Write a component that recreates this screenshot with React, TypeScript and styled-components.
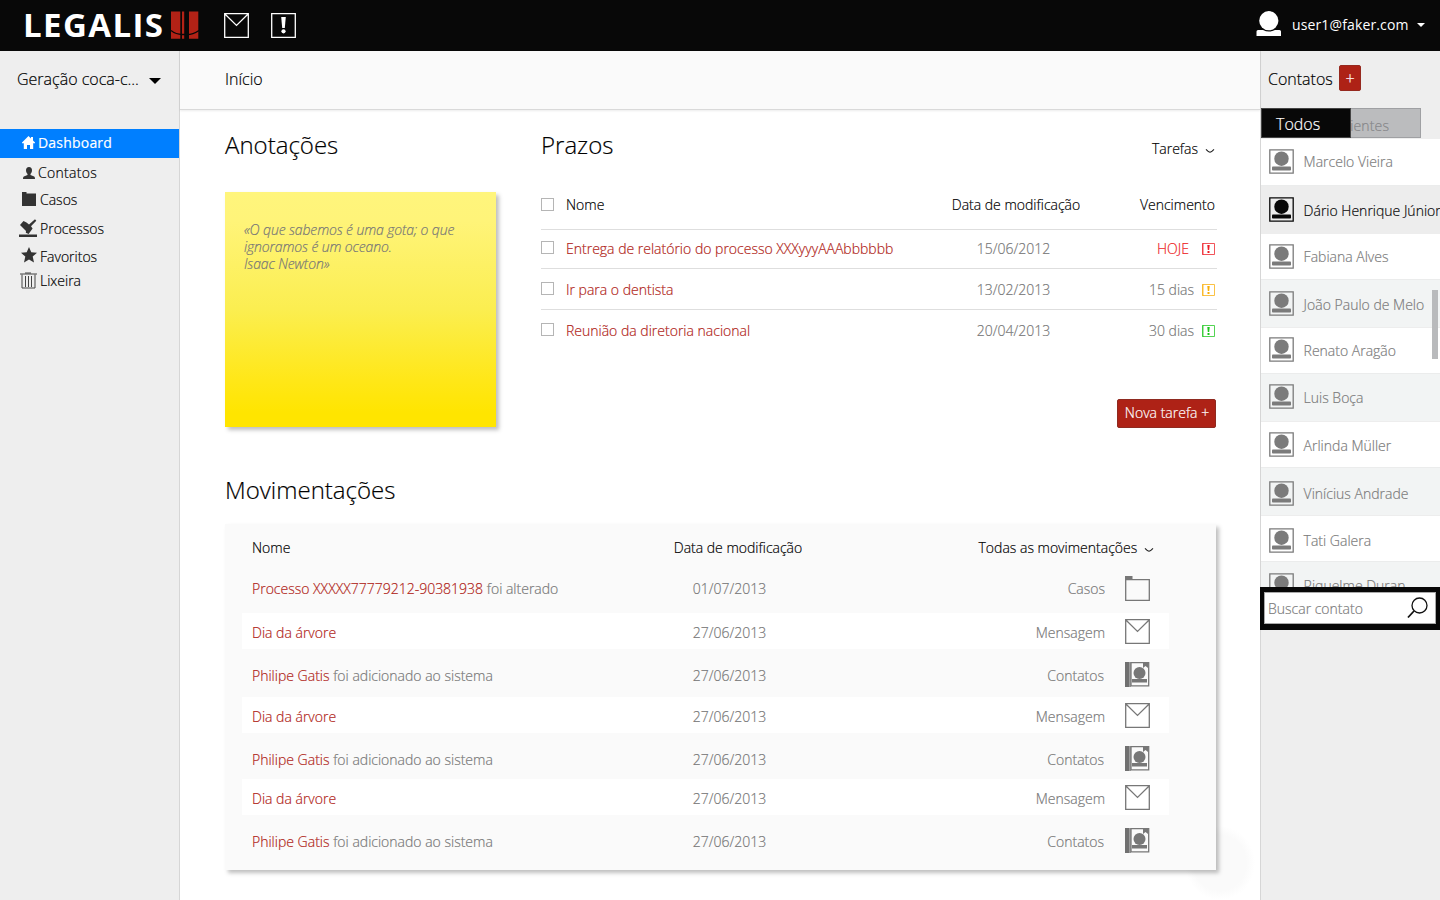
import React from 'react';
import styled, { createGlobalStyle } from 'styled-components';

const GlobalStyle = createGlobalStyle`
  * { box-sizing: border-box; }
  body { margin: 0; background: #fff; font-family: 'Open Sans', sans-serif; font-weight: 300; font-size: 14px; line-height: 20px; color: #000; overflow: hidden; -webkit-text-stroke: 0.18px currentColor; }
  svg { display: block; flex: none; }
`;

const Page = styled.div`height: 900px; width: 1440px; display: flex; flex-direction: column; overflow: hidden;`;

const TopBar = styled.header`
  height: 51px; flex: none; background: #080808; color: #fff;
  display: flex; align-items: flex-start; padding-left: 23px;
`;
const Logo = styled.div`
  display: flex; width: 200px;
  svg { margin-top: 11px; }
`;
const LogoText = styled.span`
  width: 148px; height: 51px; line-height: 49px; font-size: 33px; font-weight: 700; letter-spacing: 1.4px; white-space: nowrap;
  -webkit-text-stroke: 0;
`;
const TopIcons = styled.div`display: flex; gap: 22px; padding: 13px 0 0 1px; flex: 1;`;
const User = styled.div`
  display: flex; width: 184px; padding-top: 11px; font-weight: 400; -webkit-text-stroke: 0;
`;
const UserName = styled.span`margin: 4px 8px 0 11px; white-space: nowrap; letter-spacing: 0.13px;`;
const Caret = styled.i<{ $w: number; $h: number; $top: number; $color: string }>`
  width: 0; height: 0; margin-top: ${p => p.$top}px; flex: none;
  border-left: ${p => p.$w}px solid transparent; border-right: ${p => p.$w}px solid transparent;
  border-top: ${p => p.$h}px solid ${p => p.$color};
`;

const Body = styled.div`display: flex; flex: 1; min-height: 0;`;

const Sidebar = styled.nav`width: 180px; flex: none; background: #eee; border-right: 1px solid #d6d6d6;`;
const Office = styled.div`
  height: 78px; padding: 18px 0 0 17px; font-size: 16px; display: flex; white-space: nowrap;
  span { width: 132px; }
`;
const NavItem = styled.a<{ $h: number; $pad: number; $iconTop: number; $iconLeft: number; $textLeft: number; $active?: boolean; $spacing?: number }>`
  display: grid; grid-template-columns: ${p => p.$textLeft}px 1fr; height: ${p => p.$h}px;
  background: ${p => (p.$active ? '#007fff' : 'transparent')};
  color: ${p => (p.$active ? '#fff' : '#000')};
  font-weight: ${p => (p.$active ? 400 : 300)};
  letter-spacing: ${p => p.$spacing || 0}px;
  svg { margin: ${p => p.$iconTop}px 0 0 ${p => p.$iconLeft}px; }
  span { padding-top: ${p => p.$pad}px; }
`;

const Main = styled.main`flex: 1; min-width: 0; position: relative; display: flex; flex-direction: column;`;
const Crumb = styled.div`
  height: 59px; flex: none; background: #fafafa; border-bottom: 1px solid #d9d9d9; box-shadow: 0 1px 2px rgba(0,0,0,.08);
  padding: 18px 0 0 45px; font-size: 16px;
`;
const Content = styled.div`padding: 0 43px 0 45px; position: relative;`;
const Halo = styled.div`
  position: absolute; left: 1005px; top: 775px; width: 70px; height: 74px; border-radius: 34px;
  background: radial-gradient(closest-side, #fafafa 75%, #fff);
`;
const Columns = styled.div`display: grid; grid-template-columns: 271px 676px; column-gap: 45px; height: 345px;`;
const Title = styled.h2`
  margin: 0; padding: 18px 0 1px; font-size: 24px; line-height: 34px; font-weight: 300;
`;
const Note = styled.div`
  margin-top: 29px; height: 235px; padding: 29px 19px; font-style: italic; line-height: 17px; letter-spacing: -0.125px; color: #777;
  background: linear-gradient(#fff57c 0, #fff479 12%, #fbee50 50%, #ffe718 80%, #ffe500 94%);
  box-shadow: 3px 3px 4px rgba(0,0,0,.25);
`;
const TitleRow = styled.div`display: flex; justify-content: space-between; padding-right: 2px;`;
const Picker = styled.div<{ $top: number; $left?: number }>`
  display: flex; gap: 7px; padding: ${p => p.$top}px 0 0 ${p => p.$left || 0}px; white-space: nowrap;
  svg { margin-top: 9px; }
`;
const Task = styled.div<{ $h: number; $pad: number; $line?: boolean }>`
  display: grid; grid-template-columns: 25px 370px 160px 1fr; height: ${p => p.$h}px; padding: ${p => p.$pad}px 2px 0 0;
  border-bottom: 1px solid ${p => (p.$line ? '#dedede' : 'transparent')};
`;
const Check = styled.i<{ $top?: number }>`width: 13px; height: 13px; border: 1px solid #b5b5b5; background: #fff; margin-top: ${p => p.$top}px;`;
const RedLink = styled.a`color: #b02418; white-space: nowrap;`;
const Center = styled.span<{ $muted?: boolean }>`
  text-align: center; color: ${p => (p.$muted ? '#777' : '#000')}; padding-right: ${p => (p.$muted ? 5 : 0)}px;
`;
const Due = styled.span<{ $color?: string; $gap: number }>`
  display: flex; justify-content: flex-end; gap: ${p => p.$gap}px; color: ${p => p.$color || '#000'};
  svg { margin-top: 4px; }
`;
const ButtonRow = styled.div`display: flex; justify-content: flex-end; padding: 49px 1px 0 0;`;
const NewTask = styled.button`
  width: 99px; height: 29px; padding: 0 0 2px 1px; border: 1px solid #8f2a20; border-radius: 2px; background: #ae2216; color: #fff;
  font: 300 14px/20px 'Open Sans', sans-serif; white-space: nowrap;
`;

const Card = styled.section`
  position: relative; margin-top: 16px; width: 991px; height: 346px; background: #fafafa; padding-left: 17px;
  box-shadow: 3px 3px 4px rgba(0,0,0,.25);
`;
const Move = styled.div<{ $h: number; $white?: boolean }>`
  display: grid; grid-template-columns: 388px 200px 275px 1fr; width: 927px; height: ${p => p.$h}px; padding-left: 10px;
  background: ${p => (p.$white ? '#fff' : 'transparent')};
`;
const MoveText = styled.span<{ $pad: number; $align?: string; $muted?: boolean; $shift?: number }>`
  padding: ${p => p.$pad}px ${p => p.$shift || 0}px 0 0; text-align: ${p => p.$align || 'left'}; color: ${p => (p.$muted ? '#777' : '#000')}; white-space: nowrap;
`;
const MoveIcon = styled.span<{ $pad: number; $left: number }>`padding: ${p => p.$pad}px 0 0 ${p => p.$left}px;`;

const Contacts = styled.aside`width: 180px; flex: none; background: #eee; border-left: 1px solid #d6d6d6;`;
const ContactsHead = styled.div`height: 57px; padding: 14px 0 0 7px; display: flex; font-size: 16px; span { padding-top: 4px; width: 71px; }`;
const Add = styled.button`
  width: 22px; height: 26px; padding: 0; border: 1px solid #96291f; border-radius: 2px; background: #ae2216; color: #fff;
  font: 300 16px/22px 'Open Sans', sans-serif;
`;
const Tabs = styled.div`display: flex; height: 30px; width: 160px;`;
const TabOn = styled.div`width: 90px; background: #080808; border: 1px solid #444; color: #fff; font-size: 16px; padding: 5px 0 0 14px;`;
const TabOff = styled.div`
  width: 70px; overflow: hidden; background: #bbbcbe; border: 1px solid #9fa0a3; border-left: 0; color: #858689; padding-top: 7px;
  span { margin-left: -13px; letter-spacing: 0.15px; }
`;
const List = styled.div`height: 449px; overflow: hidden; padding-top: 1px; position: relative;`;
const Person = styled.div<{ $h: number; $bg: string; $icon: number; $text: number; $on?: boolean }>`
  display: flex; height: ${p => p.$h}px; background: ${p => p.$bg}; border-top: 1px solid ${p => (p.$bg === '#fff' ? '#ededed' : '#ebecec')}; padding-left: 8px;
  color: ${p => (p.$on ? '#080808' : '#7b7b7b')}; white-space: nowrap; overflow: hidden;
  &:first-child { border-top-color: #fff; }
  svg { margin: ${p => p.$icon - 1}px 9.600px 0 0; }
  span { padding-top: ${p => p.$text - 1}px; }
`;
const Thumb = styled.div`position: absolute; right: 2px; top: 152px; width: 6px; height: 69px; background: #b9babc;`;
const Search = styled.div`
  height: 43px; margin-left: -1px; background: #080808; padding: 5px 4px 6px;
`;
const SearchField = styled.div`
  height: 32px; background: #fff; border: 1px solid #aaa; display: flex; justify-content: space-between; padding: 6px 6px 0 3px; color: #7b7b7b;
  svg { margin-top: -2px; }
`;

const Mail = ({ c }: { c: string }) => (
  <svg width="25" height="25" viewBox="0 0 25 25" fill="none" stroke={c} strokeWidth="1.3"><path d="M.7.7h23.6v23.6H.7zM.9 1l11.6 11.4L24.1 1" /></svg>
);
const Alert = () => (
  <svg width="25" height="25" viewBox="0 0 25 25"><path d="M.7.7h23.6v23.6H.7z" fill="none" stroke="#fff" strokeWidth="1.3" /><path d="M10.2 4h4.6l-1 11h-2.6z" fill="#fff" /><circle cx="12.5" cy="18.3" r="2.1" fill="#fff" /></svg>
);
const Flag = ({ c }: { c: string }) => (
  <svg width="13" height="12" viewBox="0 0 13 12"><path d="M0 0h2v12H0z" fill={c} opacity=".4" /><path d="M.5.5h12v11H.5z" fill="none" stroke={c} opacity=".75" /><path d="M5.300 2h2.400l-.5 5H5.800zM5.500 8h2v2h-2z" fill={c} /></svg>
);
const Chevron = () => (
  <svg width="10" height="6" viewBox="0 0 10 6" fill="none" stroke="#222" strokeWidth="1.1"><path d="M1 1.3Q3.5 4 5 4.2Q6.500 4 9 1.300" /></svg>
);
const Portrait = ({ c }: { c: string }) => (
  <svg width="25" height="25" viewBox="0 0 25 25"><path d="M.8.8h23.400v23.400H.8z" fill="none" stroke={c} strokeWidth="1.300" /><circle cx="12.500" cy="9.700" r="7.200" fill={c} /><rect x="3" y="17.500" width="19" height="4" rx=".8" fill={c} /></svg>
);
const Folder = () => (
  <svg width="25" height="25" viewBox="0 0 25 25"><path d="M.7 3.700h23.600v20.600H.7z" fill="none" stroke="#777" strokeWidth="1.300" /><path d="M0 0h7.500v4H0z" fill="#777" /></svg>
);
const Book = () => (
  <svg width="25" height="25" viewBox="0 0 25 25"><path d="M0 0h4v25H0z" fill="#707070" /><path d="M4 0h2v25H4z" fill="#9a9a9a" /><path d="M6 .7h17.700v23.200H6z" fill="none" stroke="#777" strokeWidth="1.300" /><circle cx="14.500" cy="11" r="6" fill="#777" /><path d="M7 17h15v3.500H7zM18 0h5v6l-2.500-2L18 6z" fill="#777" /></svg>
);

const nav = [
  { label: 'Dashboard', h: 29, pad: 4, it: 7, il: 22, tl: 38, active: true, ls: 0.2,
    icon: <svg width="13" height="13" viewBox="0 0 13 13" fill="#fff"><path d="M6.500 0 0 6.500v.8h1.800V13H5V9h3v4h3.200V7.300H13v-.8L11 4.400V1H9v1.500z" /></svg> },
  { label: 'Contatos', h: 27, pad: 5, it: 9, il: 23, tl: 38, ls: 0.3,
    icon: <svg width="12" height="12" viewBox="0 0 12 12" fill="#333"><path d="M6 0C4 0 3 1.400 3 3.300c0 1.700.8 2.800 1.500 3.700v1L.8 9.500C.2 9.900 0 10.800 0 12h12c0-1.200-.2-2.100-.8-2.500L7.500 8V7C8.200 6.100 9 5 9 3.300 9 1.400 8 0 6 0z" /></svg> },
  { label: 'Casos', h: 28, pad: 5, it: 7, il: 22, tl: 40,
    icon: <svg width="14" height="14" viewBox="0 0 14 14" fill="#333"><path d="M0 0h4.500v1.500H14V14H0z" /></svg> },
  { label: 'Processos', h: 28, pad: 6, it: 6, il: 19, tl: 40,
    icon: <svg width="18" height="18" viewBox="0 0 18 18" fill="#333"><path d="M0 15.500h18V18H0zM1 6l3.500-4 3 1.500L10 5.500 16 .2l1.300 1.600L12 7.200l1.600 2.300-4 5.500-2.800-1.200L7 12 3 8z" /></svg> },
  { label: 'Favoritos', h: 24, pad: 6, it: 6, il: 21, tl: 40,
    icon: <svg width="16" height="16" viewBox="0 0 16 16" fill="#333"><path d="m8 0 2.300 5.300 5.700.5-4.300 3.800L13 15.500l-5-3-5 3 1.300-5.900L0 5.800l5.700-.5z" /></svg> },
  { label: 'Lixeira', h: 28, pad: 6, it: 7, il: 20, tl: 40,
    icon: <svg width="17" height="17" viewBox="0 0 17 17" fill="none" stroke="#444"><path d="M0 2h17M5 1h6M2 2.500V16h13V2.500M5.500 4v11M8.500 4v11M11.500 4v11" /></svg> },
];

const tasks = [
  { name: 'Entrega de relatório do processo XXXyyyAAAbbbbbb', date: '15/06/2012', due: 'HOJE', h: 39, pad: 9, check: 2, color: '#ed1c24', gap: 13, tone: '#ed1c24' },
  { name: 'Ir para o dentista', date: '13/02/2013', due: '15 dias', h: 41, pad: 11, check: 2, color: '#f9ae08', gap: 8, tone: '#777' },
  { name: 'Reunião da diretoria nacional', date: '20/04/2013', due: '30 dias', h: 40, pad: 11, check: 2, color: '#1bc51b', gap: 8, tone: '#777' },
];

const moves = [
  { link: 'Processo XXXXX77779212-90381938', rest: ' foi alterado', date: '01/07/2013', kind: 'Casos', h: 48, pad: 14, ip: 11 },
  { link: 'Dia da árvore', date: '27/06/2013', kind: 'Mensagem', h: 36, pad: 10, ip: 6 },
  { link: 'Philipe Gatis', rest: ' foi adicionado ao sistema', date: '27/06/2013', kind: 'Contatos', h: 48, pad: 17, ip: 13 },
  { link: 'Dia da árvore', date: '27/06/2013', kind: 'Mensagem', h: 36, pad: 10, ip: 6 },
  { link: 'Philipe Gatis', rest: ' foi adicionado ao sistema', date: '27/06/2013', kind: 'Contatos', h: 46, pad: 17, ip: 13 },
  { link: 'Dia da árvore', date: '27/06/2013', kind: 'Mensagem', h: 36, pad: 10, ip: 6 },
  { link: 'Philipe Gatis', rest: ' foi adicionado ao sistema', date: '27/06/2013', kind: 'Contatos', h: 50, pad: 17, ip: 13 },
];

const people = [
  { name: 'Marcelo Vieira', h: 46, icon: 10, text: 13, bg: '#fff' },
  { name: 'Dário Henrique Júnior', h: 48, icon: 12, text: 16, bg: '#ededed', on: true },
  { name: 'Fabiana Alves', h: 46, icon: 11, text: 14, bg: '#fff' },
  { name: 'João Paulo de Melo', h: 48, icon: 12, text: 16, bg: '#f2f4f4' },
  { name: 'Renato Aragão', h: 46, icon: 10, text: 14, bg: '#fff' },
  { name: 'Luis Boça', h: 48, icon: 11, text: 15, bg: '#f2f4f4' },
  { name: 'Arlinda Müller', h: 46, icon: 11, text: 15, bg: '#fff' },
  { name: 'Vinícius Andrade', h: 48, icon: 14, text: 17, bg: '#f2f4f4' },
  { name: 'Tati Galera', h: 46, icon: 13, text: 16, bg: '#fff' },
  { name: 'Riquelme Duran', h: 48, icon: 12, text: 15, bg: '#f2f4f4' },
];

export default function App() {
  return (
    <Page>
      <GlobalStyle />
      <TopBar>
        <Logo>
          <LogoText>LEGALIS</LogoText>
          <svg width="28" height="28" viewBox="0 0 28 28">
            <path d="M0 .4h9.300v27.300H0zM11 .4h2.200v27.300H11zM18 .4h9.300v27.300H18z" fill="#b32216" />
            <path d="M0 19.500Q5 23.500 11 23.500h5Q22 23.500 28 19.500" fill="none" stroke="#080808" strokeWidth="1.300" />
          </svg>
        </Logo>
        <TopIcons><Mail c="#fff" /><Alert /></TopIcons>
        <User>
          <svg width="25" height="25" viewBox="0 0 25 25" fill="#fff"><circle cx="12.800" cy="9.700" r="9.600" /><path d="M.5 25v-4.500q0-1.500 1.500-1.500h5q6 3 12 0h4.500q1.500 0 1.500 1.500V25z" /></svg>
          <UserName>user1@faker.com</UserName>
          <Caret $w={4} $h={4} $top={12} $color="#fff" />
        </User>
      </TopBar>
      <Body>
        <Sidebar>
          <Office><span>Geração coca-c...</span><Caret $w={6} $h={6} $top={9} $color="#000" /></Office>
          {nav.map(n => (
            <NavItem key={n.label} $h={n.h} $pad={n.pad} $iconTop={n.it} $iconLeft={n.il} $textLeft={n.tl} $active={n.active} $spacing={n.ls}>
              {n.icon}<span>{n.label}</span>
            </NavItem>
          ))}
        </Sidebar>
        <Main>
          <Halo />
          <Crumb>Início</Crumb>
          <Content>
            <Columns>
              <div>
                <Title>Anotações</Title>
                <Note>«O que sabemos é uma gota; o que ignoramos é um oceano.<br />Isaac Newton»</Note>
              </div>
              <div>
                <TitleRow>
                  <Title>Prazos</Title>
                  <Picker $top={29}>Tarefas<Chevron /></Picker>
                </TitleRow>
                <Task $h={67} $pad={32} $line>
                  <Check $top={3} /><span>Nome</span><Center>Data de modificação</Center><Due $gap={0}>Vencimento</Due>
                </Task>
                {tasks.map((t, i) => (
                  <Task key={t.name} $h={t.h} $pad={t.pad} $line={i < 2}>
                    <Check $top={t.check} /><RedLink>{t.name}</RedLink><Center $muted>{t.date}</Center>
                    <Due $color={t.tone} $gap={t.gap}>{t.due}<Flag c={t.color} /></Due>
                  </Task>
                ))}
                <ButtonRow><NewTask>Nova tarefa +</NewTask></ButtonRow>
              </div>
            </Columns>
            <Title>Movimentações</Title>
            <Card>
              <Move $h={41}>
                <MoveText $pad={14}>Nome</MoveText>
                <MoveText $pad={14} $align="center" $shift={4}>Data de modificação</MoveText>
                <Picker $top={14} $left={138.5}>Todas as movimentações<Chevron /></Picker>
              </Move>
              {moves.map((m, i) => (
                <Move key={i} $h={m.h} $white={i % 2 === 1}>
                  <MoveText $pad={m.pad} $muted><RedLink>{m.link}</RedLink>{m.rest}</MoveText>
                  <MoveText $pad={m.pad} $align="center" $muted $shift={21}>{m.date}</MoveText>
                  <MoveText $pad={m.pad} $align="right" $muted $shift={m.kind === 'Contatos' ? 11 : 10}>{m.kind}</MoveText>
                  <MoveIcon $pad={m.ip} $left={m.kind === 'Contatos' ? 9.7 : 10}>{m.kind === 'Casos' ? <Folder /> : m.kind === 'Mensagem' ? <Mail c="#777" /> : <Book />}</MoveIcon>
                </Move>
              ))}
            </Card>
          </Content>
        </Main>
        <Contacts>
          <ContactsHead><span>Contatos</span><Add>+</Add></ContactsHead>
          <Tabs><TabOn>Todos</TabOn><TabOff><span>Clientes</span></TabOff></Tabs>
          <List>
            {people.map(p => (
              <Person key={p.name} $h={p.h} $bg={p.bg} $icon={p.icon} $text={p.text} $on={p.on}>
                <Portrait c={p.on ? '#080808' : '#7b7b7b'} /><span>{p.name}</span>
              </Person>
            ))}
            <Thumb />
          </List>
          <Search><SearchField>Buscar contato
            <svg width="22" height="22" viewBox="0 0 22 22" fill="none" stroke="#111"><circle cx="12.500" cy="8.500" r="7.500" strokeWidth="1.300" /><path d="m7 14-6 6.500" strokeWidth="1.800" /></svg>
          </SearchField></Search>
        </Contacts>
      </Body>
    </Page>
  );
}
